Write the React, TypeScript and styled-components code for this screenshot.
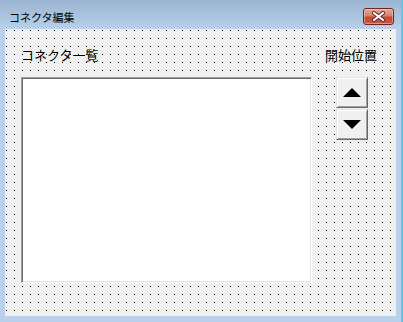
import React from 'react'
import styled, { createGlobalStyle } from 'styled-components'

const GlobalStyle = createGlobalStyle`
  html, body {
    margin: 0;
    padding: 0;
    background: #ffffff;
  }
  body {
    font-family: 'Noto Sans CJK JP', 'Noto Sans', sans-serif;
  }
`

const Frame = styled.div`
  width: 403px;
  height: 322px;
  box-sizing: border-box;
  display: flex;
  flex-direction: column;
  background: #b9d1ea;
  border-right: 2px solid #4fcdee;
`

const TitleBar = styled.div`
  height: 29px;
  flex-shrink: 0;
  display: flex;
  align-items: flex-start;
  justify-content: space-between;
  padding: 0 7px 0 9px;
  background: linear-gradient(to bottom, #9bb4d1 0%, #a9c2dd 50%, #b9d1ea 100%);
`

const Title = styled.span`
  margin-top: 11px;
  font-size: 11px;
  line-height: 13px;
  color: #000000;
`

const CloseButton = styled.button`
  margin-top: 8px;
  width: 31px;
  height: 17px;
  padding: 0;
  display: flex;
  align-items: center;
  justify-content: center;
  border: 1px solid #6b2526;
  border-radius: 3px;
  background: linear-gradient(to bottom, #e6a898 0%, #d8806c 45%, #c24a33 55%, #c9583c 100%);
  box-shadow: inset 0 0 0 1px rgba(255, 220, 210, 0.45);
`

const Client = styled.div`
  flex: 1;
  margin: 0 5px 6px 5px;
  display: flex;
  padding: 19px 0 0 16px;
  background-color: #f0f0f0;
  background-image:
    linear-gradient(to right, transparent 1px, #f0f0f0 1px),
    linear-gradient(to bottom, #000000 1px, transparent 1px);
  background-size: 8px 8px;
  background-position: 1px 1px;
`

const Column = styled.div<{ $width?: number }>`
  display: flex;
  flex-direction: column;
  ${(p) => (p.$width ? `width: ${p.$width}px;` : 'flex: 1;')}
`

const Label = styled.span<{ $indent?: number }>`
  font-size: 13px;
  line-height: 13px;
  color: #000000;
  margin-left: ${(p) => p.$indent ?? 0}px;
  white-space: nowrap;
`

const ListBox = styled.div`
  margin-top: 16px;
  height: 206px;
  box-sizing: border-box;
  background: #ffffff;
  border: 1px solid;
  border-color: #a0a0a0 #ffffff #ffffff #a0a0a0;
  box-shadow: inset 1px 1px 0 #696969, inset -1px -1px 0 #e3e3e3;
`

const SpinGroup = styled.div`
  margin: 16px 0 0 24px;
  display: flex;
  flex-direction: column;
  gap: 1px;
`

const SpinButton = styled.button`
  width: 32px;
  height: 31px;
  padding: 0;
  box-sizing: border-box;
  display: flex;
  align-items: center;
  justify-content: center;
  background: #f0f0f0;
  border: 1px solid;
  border-color: #e3e3e3 #696969 #696969 #e3e3e3;
  box-shadow: inset 1px 1px 0 #ffffff, inset -1px -1px 0 #a0a0a0;
`

const Triangle = ({ down }: { down?: boolean }) => (
  <svg width='18' height='9' viewBox='0 0 18 9'>
    <polygon points={down ? '0,0 18,0 9,9' : '9,0 18,9 0,9'} fill='#000000' />
  </svg>
)

const CloseGlyph = () => (
  <svg width='15' height='11' viewBox='0 0 15 11'>
    <path d='M3 2 L12 9 M12 2 L3 9' stroke='#5a2a2a' strokeWidth='4' strokeLinecap='round' />
    <path d='M3 2 L12 9 M12 2 L3 9' stroke='#ffffff' strokeWidth='2.2' strokeLinecap='round' />
  </svg>
)

const App = () => {
  return (
    <>
      <GlobalStyle />
      <Frame>
        <TitleBar>
          <Title>コネクタ編集</Title>
          <CloseButton aria-label='閉じる'>
            <CloseGlyph />
          </CloseButton>
        </TitleBar>
        <Client>
          <Column $width={291}>
            <Label>コネクタ一覧</Label>
            <ListBox />
          </Column>
          <Column>
            <Label $indent={13}>開始位置</Label>
            <SpinGroup>
              <SpinButton>
                <Triangle />
              </SpinButton>
              <SpinButton>
                <Triangle down />
              </SpinButton>
            </SpinGroup>
          </Column>
        </Client>
      </Frame>
    </>
  )
}

export default App
